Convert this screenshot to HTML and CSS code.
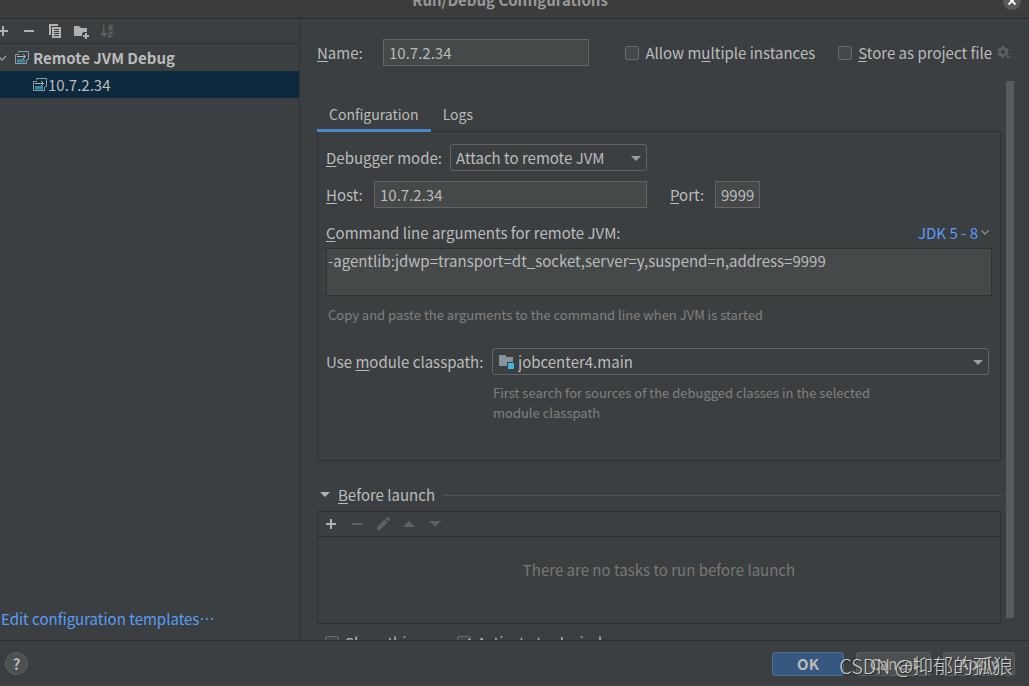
FILE: index.html
```html
<!DOCTYPE html>
<html lang="en">

<head>
    <meta charset="UTF-8">
    <meta name="viewport" content="width=device-width, initial-scale=1.0">
    <title>Run/Debug Configurations</title>
    <link rel="stylesheet" href="styles.css">
</head>

<body>
    <header class="titlebar">
        <h1 class="title">Run/Debug Configurations</h1>
        <button class="close-btn" aria-label="Close">
            <svg width="18" height="18" viewBox="0 0 18 18"><path d="M5.5 5.5l7 7M12.5 5.5l-7 7" stroke="#fff" stroke-width="1.8"/></svg>
        </button>
    </header>

    <div class="window">
        <aside class="sidebar">
            <div class="toolbar side-toolbar">
                <button aria-label="Add"><svg width="16" height="16" viewBox="0 0 16 16"><path d="M3 7h4V3h2v4h4v2H9v4H7V9H3z" fill="#afb1b3"/></svg></button>
                <button aria-label="Remove"><svg width="16" height="16" viewBox="0 0 16 16"><path d="M3 7h10v2H3z" fill="#afb1b3"/></svg></button>
                <button aria-label="Copy"><svg width="16" height="16" viewBox="0 0 16 16"><path d="M2 1h9v2H4v9H2z" fill="#afb1b3"/><path fill-rule="evenodd" d="M5 4h9v11H5zM7 6v1h5V6zM7 8v1h5V8zM7 10v1h5v-1zM7 12v1h5v-1z" fill="#afb1b3"/></svg></button>
                <button aria-label="New folder"><svg width="16" height="16" viewBox="0 0 16 16"><path d="M1 3h5l2 2h6v4h-4v1H9v3H1z" fill="#afb1b3"/><path d="M12 10h2v2h2v2h-2v2h-2v-2h-2v-2h2z" fill="#afb1b3"/></svg></button>
                <button aria-label="Sort" disabled><svg width="16" height="16" viewBox="0 0 16 16"><path d="M4 2h1.500v8H9l-4 4-4-4h3z" fill="#5e6061"/><path d="M10 2.500h3v4h-3v-2h3M9.500 9.500h3.500l-3.500 4h4" fill="none" stroke="#5e6061" stroke-width="1.300"/></svg></button>
            </div>
            <ul class="tree">
                <li class="tree-row">
                    <svg class="chevron" width="8" height="16" viewBox="0 0 8 16"><path d="M-1 7l3 3 4-4" fill="none" stroke="#9a9da0" stroke-width="1.400"/></svg>
                    <svg width="16" height="16" viewBox="0 0 16 16"><path d="M4.500 3V1.500h10v8H13M5 4.500H1.500v9h11V10" fill="none" stroke="#8b9ba5"/><path d="M3 6.500h8M9 4l2.500 2.500L9 9" fill="none" stroke="#afb9bf"/><path d="M3 9h8v3.500H3z" fill="#3888a3"/></svg>
                    <b>Remote JVM Debug</b>
                </li>
                <li class="tree-row child selected">
                    <svg width="16" height="16" viewBox="0 0 16 16"><path d="M4.500 3V1.500h10v8H13M5 4.500H1.500v9h11V10" fill="none" stroke="#8b9ba5"/><path d="M3 6.500h8M9 4l2.500 2.500L9 9" fill="none" stroke="#afb9bf"/><path d="M3 9h8v3.500H3z" fill="#3888a3"/></svg>
                    <span>10.7.2.34</span>
                </li>
            </ul>
            <a class="link templates" href="#">Edit configuration templates<span lang="zh-CN">⋯</span></a>
        </aside>

        <main class="main">
            <div class="name-row">
                <label class="name-label" for="name"><u>N</u>ame:</label>
                <input class="field name-field" id="name" type="text" value="10.7.2.34">
                <label class="check multiple"><input type="checkbox"><span>Allow m<u>u</u>ltiple instances</span></label>
                <label class="check"><input type="checkbox"><span><u>S</u>tore as project file</span></label>
                <svg class="gear" width="16" height="16" viewBox="0 0 16 16"><circle cx="7" cy="7" r="3.500" fill="none" stroke="#5e6061" stroke-width="2.400"/><path d="M7 1v2M7 11v2M1.800 4l1.800 1M10.400 9l1.800 1M1.800 10l1.800-1M10.400 5l1.800-1" stroke="#5e6061" stroke-width="2.400"/><path d="M9 11h6l-3 3z" fill="#5e6061" stroke="#3c3f41" stroke-width=".6"/></svg>
            </div>

            <div class="scroll-area">
                <div class="content">
                    <div class="tabs" role="tablist">
                        <button class="tab active" role="tab" aria-selected="true">Configuration</button>
                        <button class="tab" role="tab" aria-selected="false">Logs</button>
                    </div>

                    <section class="panel">
                        <div class="row">
                            <label class="mode-label" for="mode"><u>D</u>ebugger mode:</label>
                            <div class="combo mode-combo">
                                <select id="mode"><option>Attach to remote JVM</option></select>
                                <svg class="arrow" width="10" height="6" viewBox="0 0 10 6"><path d="M0 0h10L5 5z" fill="#9a9da0"/></svg>
                            </div>
                        </div>
                        <div class="row">
                            <label class="host-label" for="host"><u>H</u>ost:</label>
                            <input class="field host-field" id="host" type="text" value="10.7.2.34">
                            <label class="port-label" for="port"><u>P</u>ort:</label>
                            <input class="field port-field" id="port" type="text" value="9999">
                        </div>
                        <div class="args-head">
                            <label for="args"><u>C</u>ommand line arguments for remote JVM:</label>
                            <a class="link" href="#">JDK 5 - 8<svg width="10" height="10" viewBox="0 0 10 10"><path d="M1.500 2.500L5 6l3.500-3.500" fill="none" stroke="#7f8b91" stroke-width="1.500"/></svg></a>
                        </div>
                        <textarea class="args" id="args" readonly>-agentlib:jdwp=transport=dt_socket,server=y,suspend=n,address=9999</textarea>
                        <p class="hint args-hint">Copy and paste the arguments to the command line when JVM is started</p>
                        <div class="module">
                            <label class="module-label" for="module">Use <u>m</u>odule classpath:</label>
                            <div class="module-col">
                                <div class="combo module-combo">
                                    <svg class="folder" width="16" height="16" viewBox="0 0 16 16"><path d="M0 2h6l2 2h6v5H8v4H0z" fill="#87939a"/><path d="M9 10h6v6H9z" fill="#40b6e0"/></svg>
                                    <select id="module"><option>jobcenter4.main</option></select>
                                    <svg class="arrow" width="10" height="6" viewBox="0 0 10 6"><path d="M0 0h10L5 5z" fill="#9a9da0"/></svg>
                                </div>
                                <p class="hint module-hint">First search for sources of the debugged classes in the selected module classpath</p>
                            </div>
                        </div>
                    </section>

                    <h2 class="section-head">
                        <svg width="10" height="6" viewBox="0 0 10 6"><path d="M0 0h10L5 5z" fill="#afb1b3"/></svg>
                        <span><u>B</u>efore launch</span>
                    </h2>
                    <section class="tasks">
                        <div class="toolbar task-toolbar">
                            <button aria-label="Add task"><svg width="16" height="16" viewBox="0 0 16 16"><path d="M3 7h4V3h2v4h4v2H9v4H7V9H3z" fill="#afb1b3"/></svg></button>
                            <button aria-label="Remove task" disabled><svg width="16" height="16" viewBox="0 0 16 16"><path d="M3 7h10v2H3z" fill="#5e6061"/></svg></button>
                            <button aria-label="Edit task" disabled><svg width="16" height="16" viewBox="0 0 16 16"><path d="M2 11l7.500-7.500 3 3L5 14H2zM10.500 2.500L12 1h1l2 2v1l-1.500 1.500z" fill="#5e6061"/></svg></button>
                            <button aria-label="Move up" disabled><svg width="16" height="16" viewBox="0 0 16 16"><path d="M2 11h12L8 5z" fill="#5e6061"/></svg></button>
                            <button aria-label="Move down" disabled><svg width="16" height="16" viewBox="0 0 16 16"><path d="M2 5h12l-6 6z" fill="#5e6061"/></svg></button>
                        </div>
                        <p class="empty">There are no tasks to run before launch</p>
                    </section>
                    <div class="options">
                        <label class="check option"><input type="checkbox"><span>Show this page</span></label>
                        <label class="check"><input type="checkbox" checked><span>Activate tool window</span></label>
                    </div>
                </div>
                <div class="scrollbar"></div>
            </div>
        </main>
    </div>

    <footer class="footer">
        <button class="help" aria-label="Help">?</button>
        <button class="btn primary">OK</button>
        <button class="btn cancel">Cancel</button>
        <button class="btn">Apply</button>
        <span class="watermark">CSDN @抑郁的孤狼</span>
    </footer>
</body>

</html>
```
FILE: styles.css
```css
* {
    box-sizing: border-box;
}

body {
    display: flex;
    flex-direction: column;
    height: 100vh;
    margin: 0;
    overflow: hidden;
    background-color: #3c3f41;
    color: #bbbbbb;
    font-family: "Noto Sans CJK SC", "Noto Sans", sans-serif;
    font-size: 15px;
    line-height: 24px;
}

button, input, select, textarea {
    margin: 0;
    color: inherit;
    font: inherit;
}

h1, h2, p, ul {
    margin: 0;
    padding: 0;
}

svg {
    display: block;
    flex: none;
}

u {
    text-underline-offset: 2px;
}

/* Title bar */
.titlebar {
    display: flex;
    flex: none;
    align-items: flex-end;
    height: 19px;
    padding: 0 8px 8px 0;
    overflow: hidden;
    border-bottom: 1px solid #2b2b2b;
    background-color: #3c3c3c;
}

.title {
    flex: 1;
    padding-left: 17px;
    color: #999999;
    font-size: 15px;
    line-height: 20px;
    text-align: center;
}

.close-btn {
    width: 18px;
    height: 18px;
    padding: 0;
    border: 0;
    border-radius: 50%;
    background-color: #595959;
}

.window {
    display: flex;
    flex: 1;
    min-height: 0;
}

/* Configuration tree */
.sidebar {
    display: flex;
    flex: none;
    flex-direction: column;
    width: 300px;
    border-right: 1px solid #323232;
}

.toolbar {
    display: flex;
    align-items: center;
    gap: 10px;
    height: 25px;
    border-bottom: 1px solid #323232;
}

.toolbar button {
    padding: 0;
    border: 0;
    background: none;
}

.side-toolbar {
    margin-left: -5px;
}

.tree {
    flex: 1;
    list-style: none;
}

.tree-row {
    display: flex;
    align-items: center;
    height: 27px;
    padding-right: 8px;
}

.tree-row .chevron {
    margin-right: 6px;
}

.tree-row b {
    margin-left: 3px;
}

.child {
    padding-left: 32px;
}

.selected {
    background-color: #0d293e;
}

.link {
    color: #589df6;
    text-decoration: none;
}

.templates {
    padding: 0 0 9px 1px;
}

/* Name row */
.main {
    display: flex;
    flex: 1;
    flex-direction: column;
    min-width: 0;
    padding-left: 17px;
}

.name-row {
    display: flex;
    align-items: center;
    padding: 20px 17px 15px 0;
}

.name-label {
    width: 66px;
}

.field {
    height: 27px;
    padding: 0 5px;
    border: 1px solid #646464;
    outline: none;
    background-color: #45494a;
}

.name-field {
    flex: 1;
    min-width: 0;
    margin-right: 36px;
}

.check {
    display: flex;
    align-items: center;
    gap: 6px;
    white-space: nowrap;
}

.check input {
    flex: none;
    width: 14px;
    height: 14px;
    border: 1px solid #6b6b6b;
    border-radius: 2px;
    appearance: none;
    background-color: #43494a;
}

.check input:checked {
    background-image: linear-gradient(125deg, transparent 60%, #a7a7a7 60%, #a7a7a7 75%, transparent 75%);
}

.multiple {
    margin-right: 23px;
}

.gear {
    margin-left: 4px;
}

/* Scrolled settings */
.scroll-area {
    display: flex;
    flex: 1;
    min-height: 0;
    overflow: hidden;
}

.content {
    flex: 1;
    min-width: 0;
}

.scrollbar {
    width: 8px;
    margin: 0 15px 22px 5px;
    background-color: #595b5d;
}

.tabs {
    display: flex;
    padding-top: 18px;
}

.tab {
    height: 33px;
    padding: 0 12px;
    border: 0;
    border-bottom: 3px solid transparent;
    background: none;
    font-size: 14px;
}

.tab.active {
    border-bottom-color: #4a88c7;
}

.panel {
    height: 330px;
    margin-top: -1px;
    padding: 12px 8px;
    border: 1px solid #323232;
}

.row {
    display: flex;
    align-items: center;
    margin-bottom: 10px;
}

.mode-label {
    width: 124px;
}

.combo {
    position: relative;
    height: 27px;
}

.combo select {
    width: 100%;
    height: 27px;
    padding: 0 24px 0 5px;
    border: 1px solid #646464;
    border-radius: 3px;
    outline: none;
    appearance: none;
    background-color: #3c3f41;
}

.combo .arrow {
    position: absolute;
    top: 12px;
    right: 6px;
}

.mode-combo {
    width: 197px;
}

.host-label {
    width: 48px;
}

.host-field {
    width: 273px;
    margin-right: 23px;
}

.port-label {
    width: 45px;
}

.port-field {
    width: 45px;
}

.args-head {
    display: flex;
    justify-content: space-between;
    padding: 3px 2px 3px 0;
}

.args-head .link {
    display: flex;
    align-items: center;
    gap: 2px;
}

.args {
    display: block;
    width: 100%;
    height: 48px;
    padding: 0 1px;
    border: 1px solid #323232;
    outline: none;
    resize: none;
    background-color: #45494a;
}

.hint {
    color: #808080;
    font-size: 13px;
    line-height: 20px;
}

.args-hint {
    margin: 9px 0 23px 2px;
}

.module {
    display: flex;
    padding-right: 3px;
}

.module-label {
    width: 166px;
    line-height: 27px;
}

.module-col {
    flex: 1;
}

.module-combo select {
    padding-left: 25px;
}

.module-combo .folder {
    position: absolute;
    top: 5px;
    left: 7px;
}

.module-hint {
    max-width: 400px;
    margin: 8px 0 0 1px;
}

/* Before launch */
.section-head {
    display: flex;
    align-items: center;
    gap: 8px;
    padding: 22px 0 4px 3px;
    font-size: 15px;
    font-weight: normal;
}

.section-head::after {
    flex: 1;
    height: 1px;
    background-color: #4f5254;
    content: "";
}

.tasks {
    height: 113px;
    border: 1px solid #323232;
}

.task-toolbar {
    padding-left: 5px;
}

.empty {
    padding-top: 21px;
    color: #777777;
    text-align: center;
}

.options {
    display: flex;
    padding: 7px 8px 0;
}

.option {
    width: 132px;
}

/* Dialog buttons */
.footer {
    position: relative;
    display: flex;
    flex: none;
    align-items: center;
    gap: 12px;
    height: 46px;
    padding: 0 14px 0 5px;
    border-top: 1px solid #323232;
}

.help {
    width: 23px;
    height: 23px;
    margin-right: auto;
    padding: 0;
    border: 1px solid #5e6060;
    border-radius: 50%;
    background-color: #4c5052;
    font-weight: bold;
    line-height: 20px;
}

.btn {
    width: 72px;
    height: 24px;
    padding: 0;
    border: 1px solid #5e6060;
    border-radius: 3px;
    background-color: #4c5052;
    line-height: 22px;
}

.cancel {
    width: 75px;
}

.primary {
    border-color: #4c708c;
    background-color: #365880;
    font-weight: bold;
}

.watermark {
    position: absolute;
    right: 16px;
    bottom: 8px;
    color: rgba(225, 225, 225, 0.9);
    font-size: 20px;
    font-weight: 300;
    text-shadow: 1px 1px 1px #222222;
}
```
